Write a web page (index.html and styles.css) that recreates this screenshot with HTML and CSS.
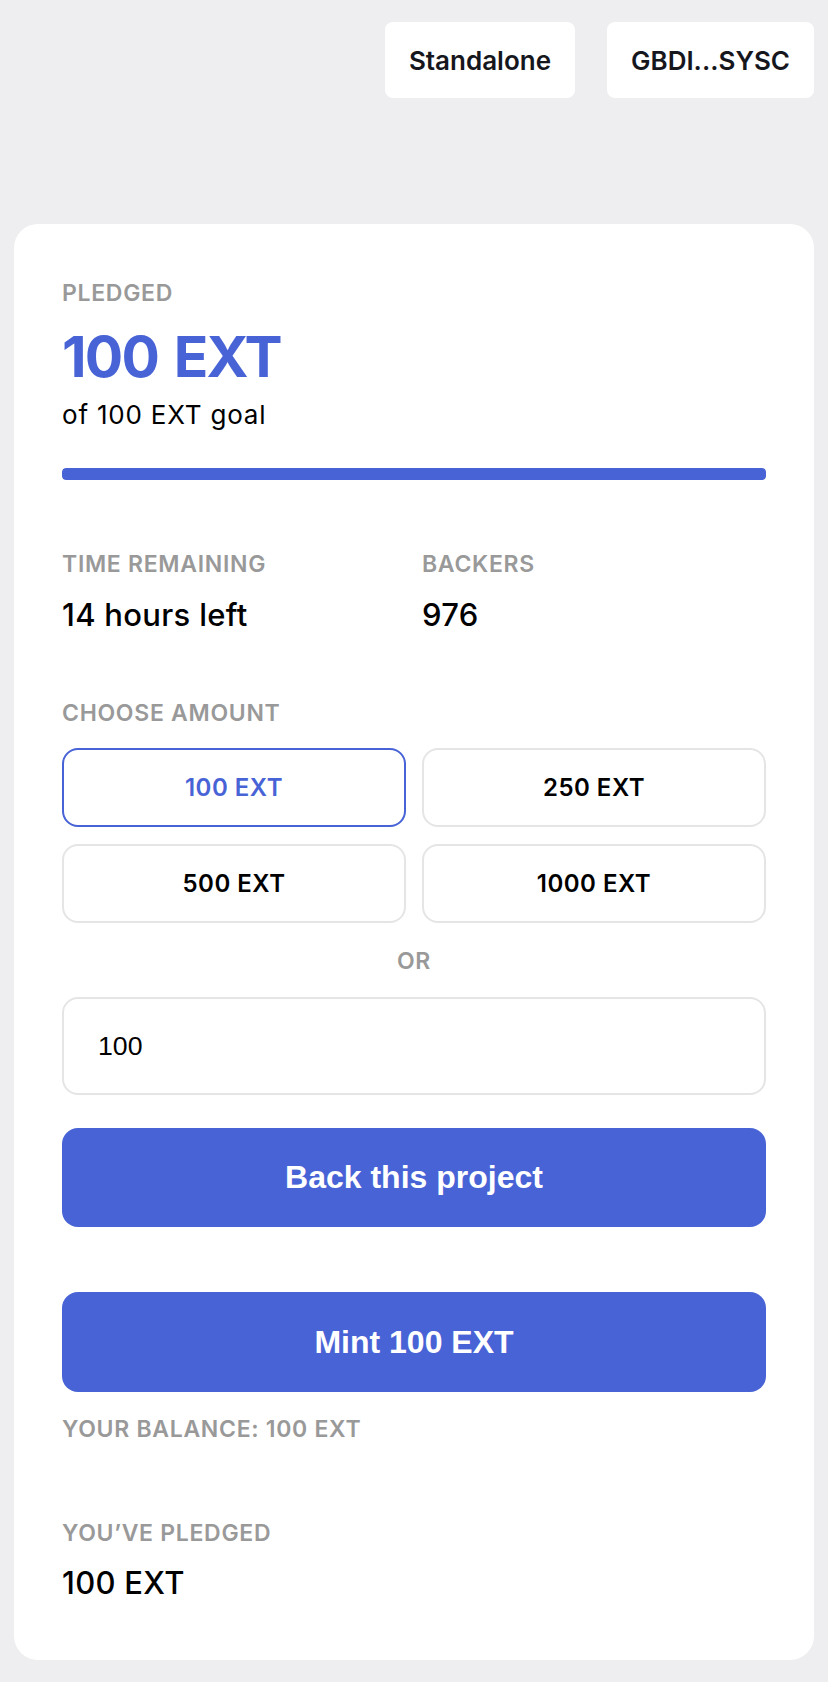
FILE: index.html
```html
<!DOCTYPE html>
<html lang="en">
<head>
<meta charset="utf-8">
<title>Pledge</title>
<link rel="stylesheet" href="styles.css">
</head>
<body>
<header class="topbar">
  <button class="pill">Standalone</button>
  <button class="pill">GBDI...SYSC</button>
</header>
<main class="card">
  <div class="label">PLEDGED</div>
  <div class="big">100 EXT</div>
  <div class="goal">of 100 EXT goal</div>
  <div class="progress"><div class="progress-fill" style="width:100%"></div></div>

  <div class="stats">
    <div class="stat">
      <div class="label">TIME REMAINING</div>
      <div class="value">14 hours left</div>
    </div>
    <div class="stat">
      <div class="label">BACKERS</div>
      <div class="value">976</div>
    </div>
  </div>

  <div class="label choose">CHOOSE AMOUNT</div>
  <div class="amounts">
    <button class="amount selected">100 EXT</button>
    <button class="amount">250 EXT</button>
    <button class="amount">500 EXT</button>
    <button class="amount">1000 EXT</button>
  </div>
  <div class="label or">OR</div>
  <input class="amount-input" type="text" value="100">
  <button class="primary back">Back this project</button>
  <button class="primary mint">Mint 100 EXT</button>
  <div class="label balance">YOUR BALANCE: 100 EXT</div>
  <div class="label yours">YOU’VE PLEDGED</div>
  <div class="value yours-value">100 EXT</div>
</main>
</body>
</html>
```

FILE: styles.css
```css
* { box-sizing: border-box; }
html, body {
  margin: 0;
  padding: 0;
  background: #eeeef0;
}
body {
  font-family: Inter, "Noto Sans", sans-serif;
  color: #000;
  width: 828px;
  min-height: 1682px;
}
.topbar {
  display: flex;
  justify-content: flex-end;
  gap: 32px;
  padding: 22px 14px 0 0;
  height: 224px;
}
.pill {
  height: 76px;
  padding: 0 24px;
  background: #fff;
  border: none;
  border-radius: 8px;
  font-family: Inter, sans-serif;
  font-weight: 600;
  font-size: 26px;
  color: #16161d;
}
.card {
  margin: 0 14px;
  background: #fff;
  border-radius: 24px;
  padding: 56px 48px 59px;
  display: flex;
  flex-direction: column;
}
.label {
  font-size: 23px;
  line-height: 26px;
  font-weight: 600;
  color: #999;
  letter-spacing: 0.7px;
}
.big {
  margin-top: 16px;
  font-size: 57px;
  line-height: 70px;
  font-weight: 700;
  color: #4863d6;
  letter-spacing: -1.8px;
  word-spacing: 4px;
}
.goal {
  margin-top: 8px;
  font-size: 26px;
  line-height: 30px;
  letter-spacing: 0.8px;
}
.progress {
  margin-top: 38px;
  height: 12px;
  border-radius: 4px;
  background: #e5e5e5;
  overflow: hidden;
}
.progress-fill {
  height: 100%;
  background: #4863d6;
  border-radius: 4px;
}
.stats {
  margin-top: 71px;
  display: grid;
  grid-template-columns: 1fr 1fr;
  column-gap: 16px;
}
.value {
  margin-top: 20px;
  font-size: 31px;
  line-height: 36px;
  font-weight: 500;
  letter-spacing: 0.3px;
}
.choose { margin-top: 67px; }
.amounts {
  margin-top: 22px;
  display: grid;
  grid-template-columns: 1fr 1fr;
  gap: 17px 16px;
}
.amount {
  height: 79px;
  background: #fff;
  border: 2px solid #e5e5e5;
  border-radius: 16px;
  font-family: Inter, sans-serif;
  font-weight: 600;
  font-size: 24px;
  letter-spacing: 0.5px;
  color: #000;
}
.amount.selected {
  border-color: #4863d6;
  color: #4863d6;
}
.or {
  margin-top: 25px;
  text-align: center;
}
.amount-input {
  margin-top: 23px;
  height: 98px;
  width: 100%;
  border: 2px solid #e5e5e5;
  border-radius: 16px;
  padding: 0 34px;
  font-family: "Liberation Sans", Arial, sans-serif;
  font-size: 26.67px;
  color: #000;
  outline: none;
}
.primary {
  width: 100%;
  border: none;
  border-radius: 16px;
  background: #4863d6;
  color: #fff;
  font-family: "Liberation Sans", Arial, sans-serif;
  font-weight: 700;
  font-size: 32px;
}
.back {
  margin-top: 33px;
  height: 99px;
}
.mint {
  margin-top: 65px;
  height: 100px;
}
.balance { margin-top: 24px; }
.yours { margin-top: 78px; }
.yours-value { margin-top: 19px; }
```
